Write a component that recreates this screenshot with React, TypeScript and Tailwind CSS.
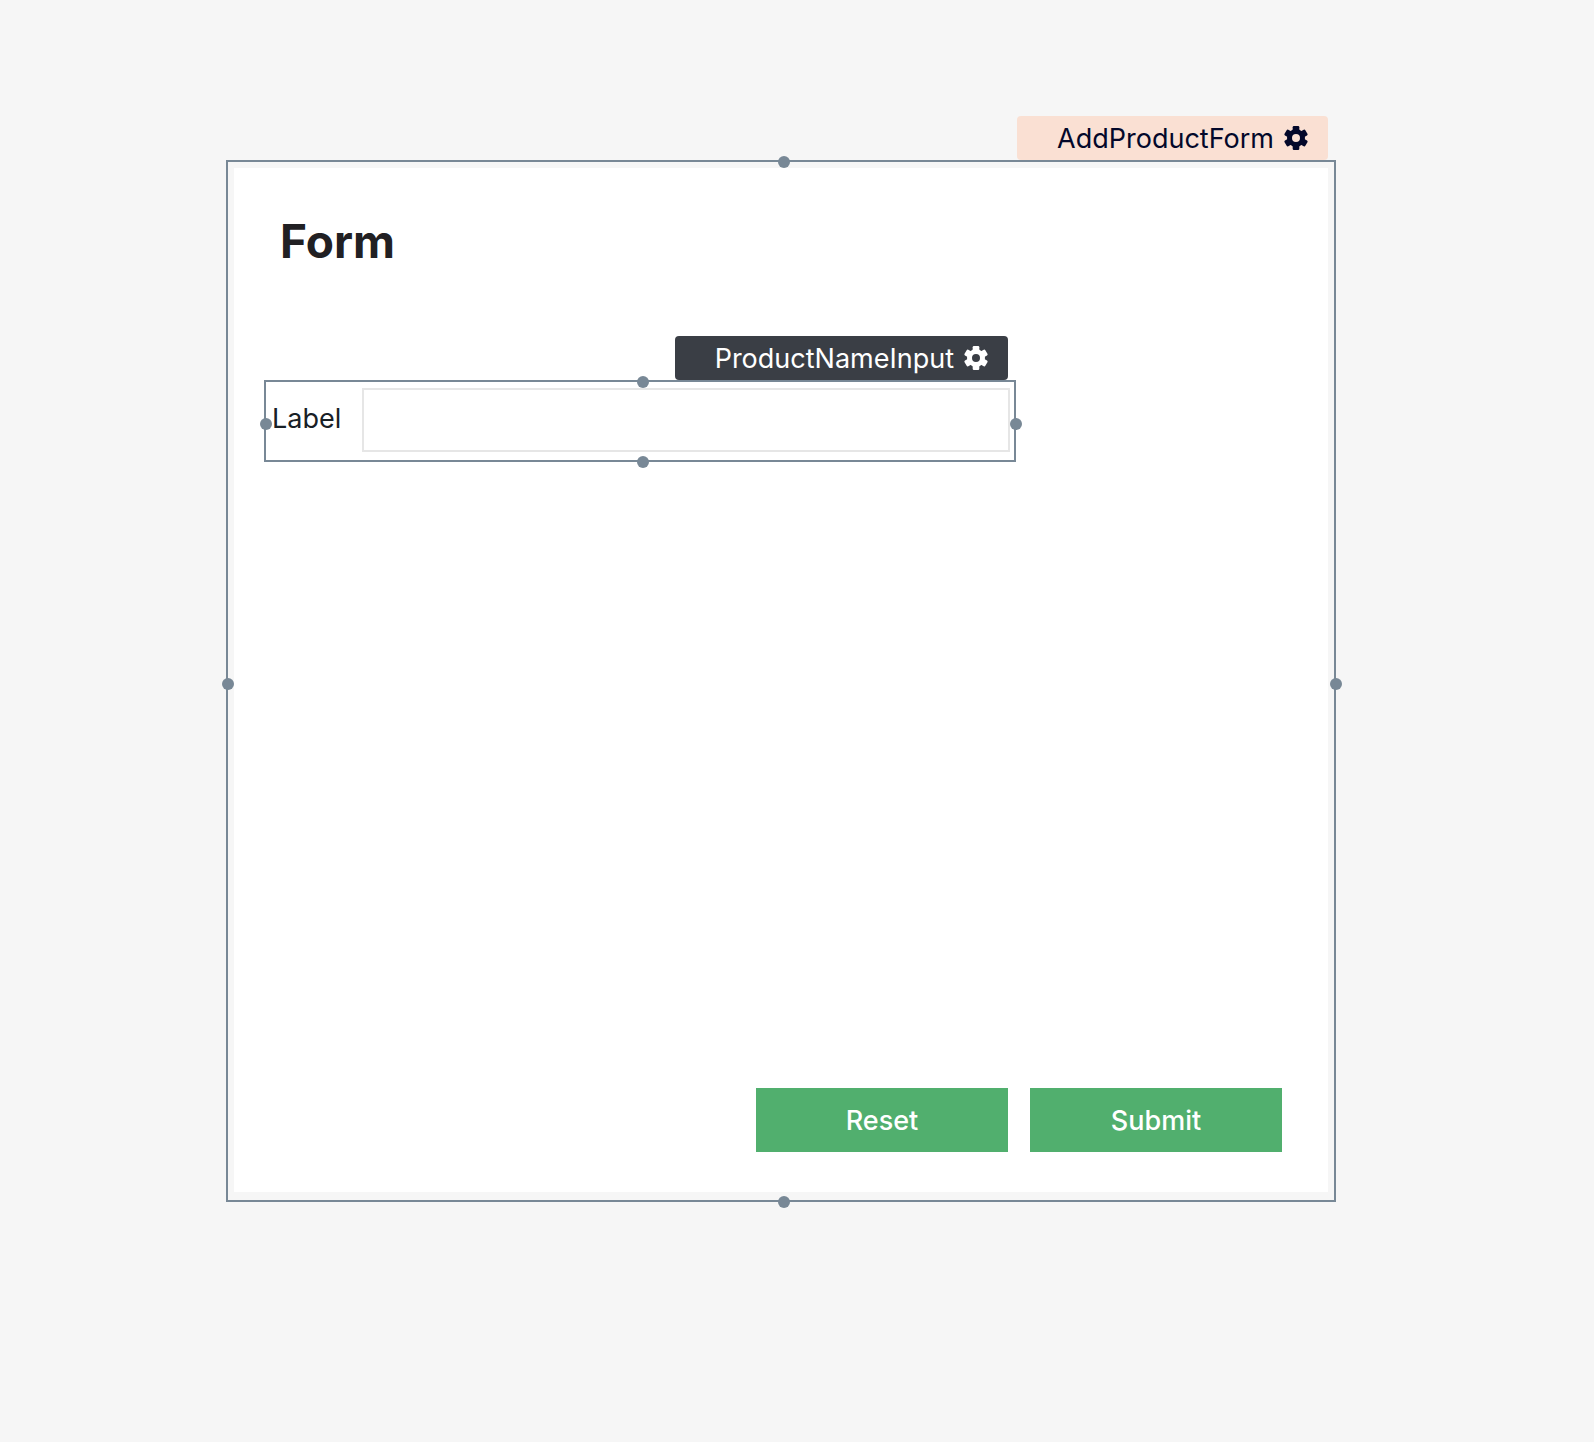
import React from "react";

const dot = "absolute size-3 rounded-full bg-[#788896]";

function Handles() {
  return (
    <>
      <span className={`${dot} -top-1.5 left-1/2 -ml-[3px]`} />
      <span className={`${dot} -bottom-2 left-1/2 -ml-[3px]`} />
      <span className={`${dot} -left-1.5 top-1/2 -mt-[3px]`} />
      <span className={`${dot} -right-2 top-1/2 -mt-[3px]`} />
    </>
  );
}

function Gear() {
  return (
    <svg viewBox="-12 -12 24 24" className="size-6 overflow-visible" aria-hidden="true">
      <circle r="6.5" fill="none" stroke="currentColor" strokeWidth="5" />
      {[0, 60, 120, 180, 240, 300].map((angle) => (
        <rect
          key={angle}
          x="-3.3"
          y="-12"
          width="6.6"
          height="7"
          rx="1.2"
          fill="currentColor"
          transform={`rotate(${angle})`}
        />
      ))}
    </svg>
  );
}

function NameTag({ name, tone }: { name: string; tone: string }) {
  return (
    <div
      className={`absolute right-1.5 bottom-full mb-0.5 flex h-11 items-center gap-2.5 rounded-[4px] pr-5 pl-10 text-[27px] leading-8 whitespace-nowrap ${tone}`}
    >
      <span className="pt-0.5">{name}</span>
      <button type="button" aria-label={`${name} settings`}>
        <Gear />
      </button>
    </div>
  );
}

export default function App() {
  return (
    <main className="min-h-screen bg-[#f6f6f6] pt-40 pr-[258px] pb-60 pl-[226px] font-['Inter',sans-serif]">
      <section className="relative border-2 border-[#788896] px-1.5 pt-1.5 pb-2">
        <NameTag name="AddProductForm" tone="bg-[#fae0d3] text-[#03082a]" />
        <form className="flex min-h-[1024px] flex-col bg-white pt-[45px] pb-10">
          <h1 className="px-[46px] text-[46px] leading-[56px] font-bold text-[#212023]">Form</h1>
          <div className="relative mt-[111px] ml-[30px] flex w-[752px] border-2 border-[#788896] pt-1.5 pr-1 pb-2 pl-1.5">
            <NameTag name="ProductNameInput" tone="bg-[#3a3e45] text-white" />
            <label htmlFor="product-name" className="w-[90px] pt-[15px] text-[27px] leading-8 text-[#182026]">
              Label
            </label>
            <input
              id="product-name"
              type="text"
              className="h-16 min-w-0 flex-1 border-2 border-[#e6e6e6] bg-white px-4 text-[27px] outline-none"
            />
            <Handles />
          </div>
          <div className="mt-auto flex justify-end gap-[22px] px-[46px] text-[27px] font-medium text-white">
            <button type="reset" className="h-16 w-[252px] bg-[#51af6e] pt-0.5">
              Reset
            </button>
            <button type="submit" className="h-16 w-[252px] bg-[#51af6e] pt-0.5">
              Submit
            </button>
          </div>
        </form>
        <Handles />
      </section>
    </main>
  );
}
